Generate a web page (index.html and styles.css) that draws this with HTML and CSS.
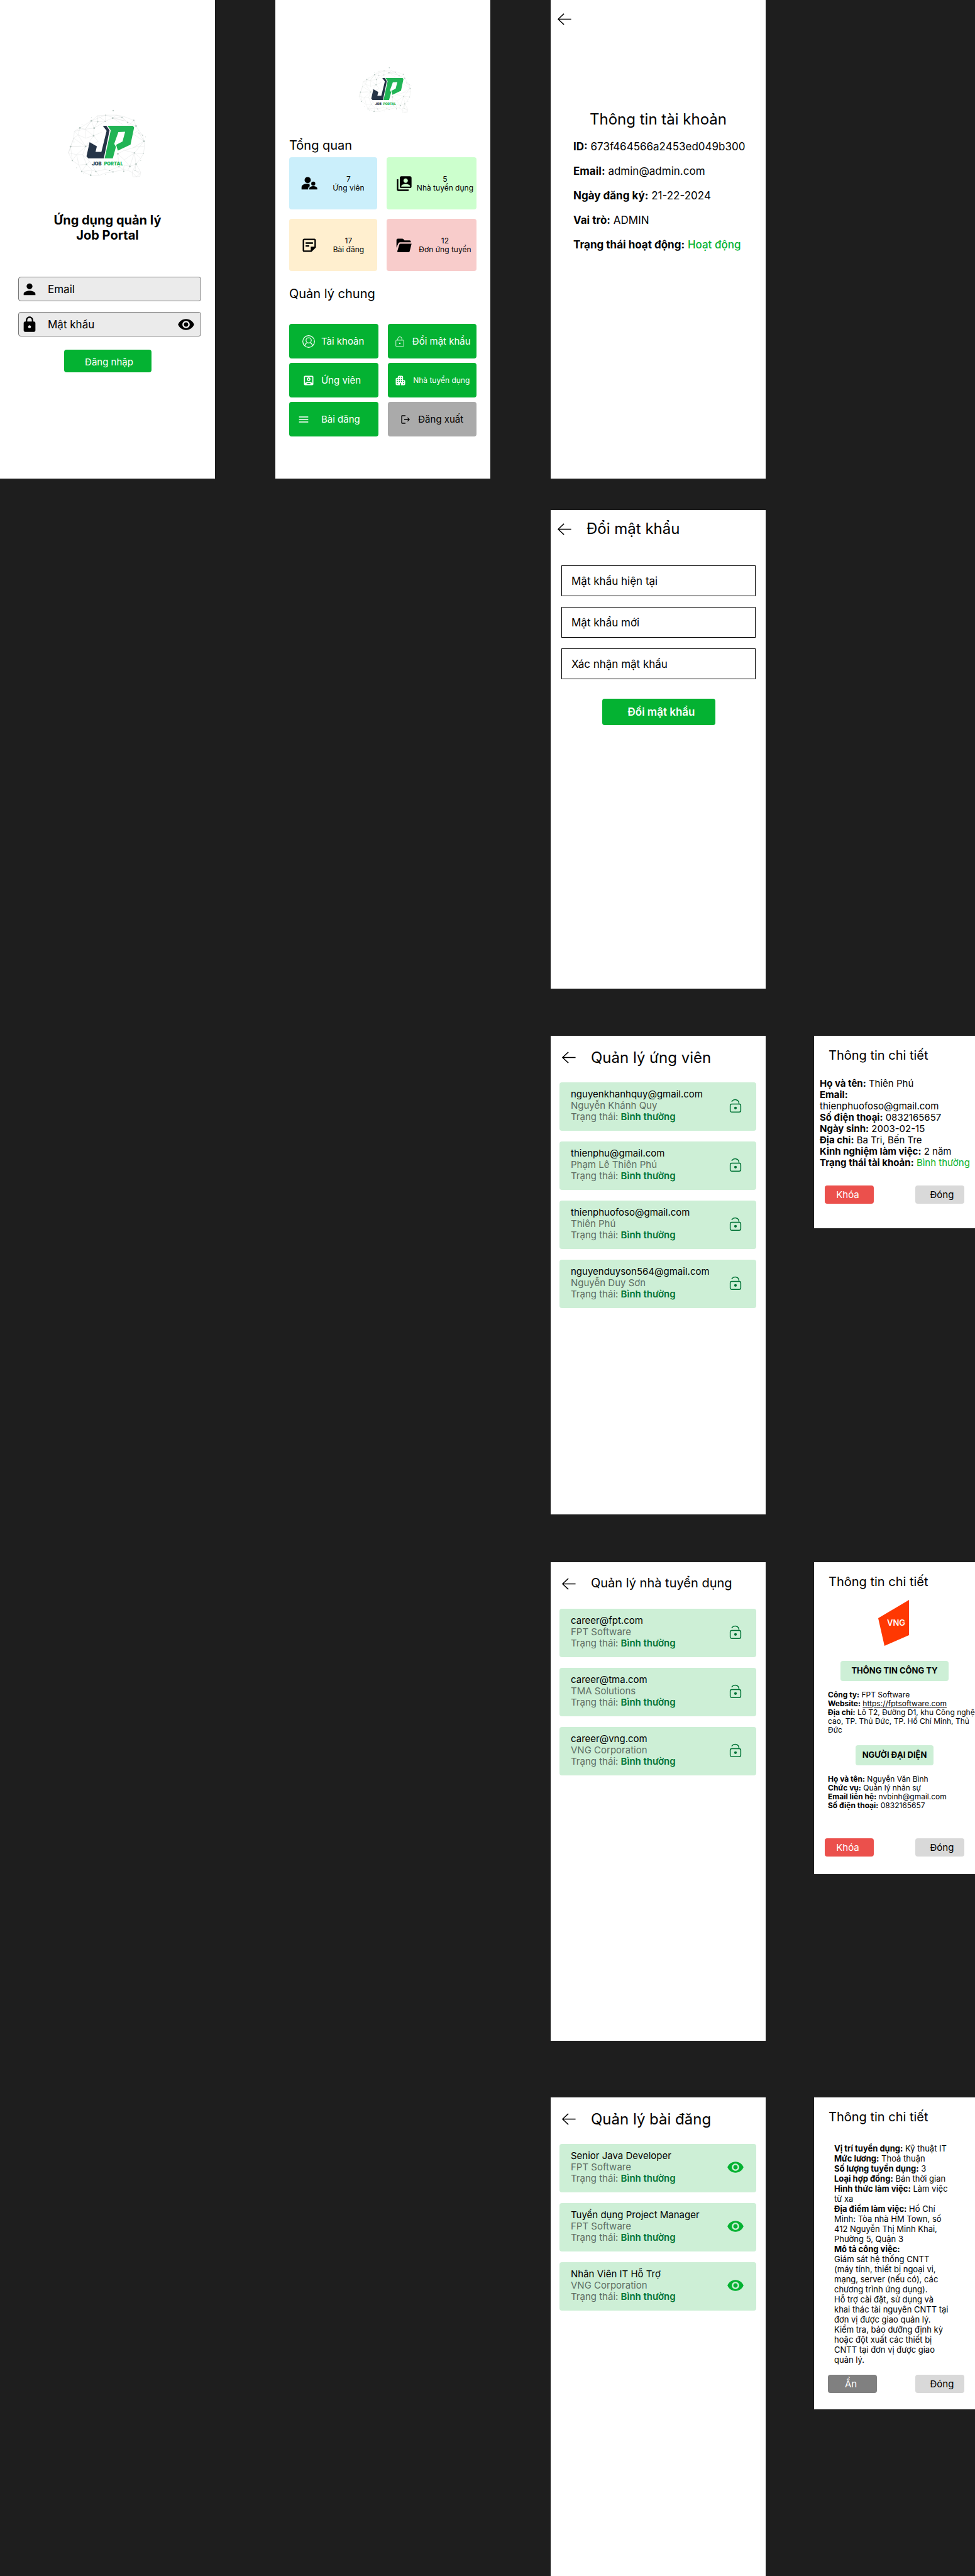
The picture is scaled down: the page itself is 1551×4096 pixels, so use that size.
FILE: index.html
```html
<!DOCTYPE html>
<html lang="vi">
<head>
<meta charset="utf-8">
<meta name="viewport" content="width=device-width, initial-scale=1">
<title>Job Portal – Ứng dụng quản lý</title>
<link rel="stylesheet" href="styles.css">
</head>
<body>
<svg class="sprite" aria-hidden="true">
  <symbol id="logo" viewBox="0 0 510 450">
    <g fill="none" stroke="#d9dddc" stroke-width="1.5">
      <path d="M28 280L58 195L62 155L94 136L160 95L197 65L242 62L304 62L342 68L405 92L418 125L434 150L456 178L464 213L468 240L460 285L445 312L418 344L430 365L445 392L440 416L400 418L395 392L370 380L345 376L285 390L240 396L205 410L156 409L104 387L88 350L50 324Z"/>
      <path d="M28 280L40 244L58 195L83 176L62 155M94 136L83 176L127 195L124 143L94 136M160 95L124 143L176 137L160 95L197 100L197 65L240 97L242 62M197 100L240 97L283 79L304 62L337 75L283 79M176 137L197 100M176 137L240 97M127 195L173 181L124 143M173 181L176 137M83 176L127 243L173 181M58 195L127 243L40 244L100 240M40 244L50 324L75 290L28 280M75 290L127 243L110 290L75 290L88 350L132 346L110 290L150 330L132 346L104 387L164 380L156 409M132 346L164 380L186 387L205 410M186 387L150 330M186 387L240 375L265 381L285 390M240 375L230 350M265 381L319 360L345 376L350 350L382 358L370 380M319 360L313 285L350 265L408 280L382 358M313 285L350 320L382 358L418 344L408 280L460 285M408 280L464 213L400 250M350 320L408 280L445 312M464 213L434 165L456 178M434 150L400 170L464 213M395 392L418 344L412 382L445 392M395 392L420 418L440 400L412 382M370 104L337 75L380 120L405 92M370 104L418 125M242 62L350 95L283 79L340 115M173 181L220 160M173 181L200 215L127 243M160 95L242 62M62 155L124 143L160 95M350 265L420 245L468 240"/>
    </g>
    <g fill="#b6c5c0">
      <circle cx="286" cy="36" r="4"/><circle cx="160" cy="95" r="5"/><circle cx="94" cy="136" r="5"/><circle cx="176" cy="137" r="5"/><circle cx="197" cy="100" r="4"/><circle cx="240" cy="98" r="4"/><circle cx="283" cy="79" r="5"/><circle cx="337" cy="75" r="4"/><circle cx="370" cy="104" r="4"/><circle cx="405" cy="92" r="4"/><circle cx="418" cy="125" r="5"/><circle cx="173" cy="181" r="5"/><circle cx="40" cy="244" r="5"/><circle cx="127" cy="243" r="5"/><circle cx="50" cy="324" r="4"/><circle cx="132" cy="346" r="4"/><circle cx="104" cy="387" r="4"/><circle cx="156" cy="409" r="5"/><circle cx="186" cy="387" r="4"/><circle cx="265" cy="381" r="4"/><circle cx="285" cy="390" r="4"/><circle cx="319" cy="360" r="4"/><circle cx="347" cy="386" r="4"/><circle cx="313" cy="285" r="5"/><circle cx="408" cy="280" r="4"/><circle cx="382" cy="358" r="5"/><circle cx="418" cy="344" r="5"/><circle cx="464" cy="213" r="5"/><circle cx="456" cy="178" r="3"/><circle cx="434" cy="165" r="3"/><circle cx="242" cy="62" r="3"/><circle cx="160" cy="76" r="2"/><circle cx="106" cy="118" r="2"/><circle cx="472" cy="188" r="2"/><circle cx="460" cy="285" r="3"/><circle cx="75" cy="366" r="2"/><circle cx="115" cy="401" r="2"/><circle cx="243" cy="404" r="2"/><circle cx="58" cy="195" r="2"/><circle cx="445" cy="325" r="2"/><circle cx="60" cy="217" r="2"/><circle cx="412" cy="382" r="3"/>
    </g>
    <path fill="#253447" d="M226 123H247L265 150L232 311H142L132 299L150 218L192 242L184 274H218L248 152Z"/>
    <path fill="#21b455" d="M253 123H400L407 133L386 232L313 267L303 233L340 214L355 158L316 160L292 228L302 245L284 311H237L272 150Z"/>
  </symbol>
  <symbol id="i-back" viewBox="0 0 26 22"><path d="M25.500 11H1M12 .8L1 11l11 10.200" fill="none" stroke="currentColor" stroke-width="1.700" stroke-linejoin="round"/></symbol>
  <symbol id="i-person" viewBox="0 0 24 24"><path d="M12 12c2.210 0 4-1.790 4-4s-1.790-4-4-4-4 1.790-4 4 1.790 4 4 4zm0 2c-2.670 0-8 1.340-8 4v2h16v-2c0-2.660-5.330-4-8-4z"/></symbol>
  <symbol id="i-lock" viewBox="0 0 24 24"><path d="M18 8h-1V6c0-2.760-2.240-5-5-5S7 3.240 7 6v2H6c-1.100 0-2 .9-2 2v10c0 1.100.9 2 2 2h12c1.100 0 2-.9 2-2V10c0-1.100-.9-2-2-2zm-6 9c-1.100 0-2-.9-2-2s.9-2 2-2 2 .9 2 2-.9 2-2 2zm3.100-9H8.900V6c0-1.710 1.390-3.100 3.100-3.100 1.710 0 3.100 1.390 3.100 3.100v2z"/></symbol>
  <symbol id="i-eye" viewBox="0 0 24 24"><path d="M12 4.500C7 4.500 2.730 7.610 1 12c1.730 4.390 6 7.500 11 7.500s9.270-3.110 11-7.500c-1.730-4.390-6-7.500-11-7.500zM12 17c-2.760 0-5-2.240-5-5s2.240-5 5-5 5 2.240 5 5-2.240 5-5 5zm0-8c-1.660 0-3 1.340-3 3s1.340 3 3 3 3-1.340 3-3-1.340-3-3-3z"/></symbol>
  <symbol id="i-people" viewBox="-2 -4 33 33"><circle cx="11.500" cy="5.800" r="5.800"/><circle cx="22" cy="12.500" r="3.800"/><path d="M0 23.500v-4.500C0 15 5.500 12.500 11 12.500q2.200 0 4.300.4C14.600 14.600 15 16 15.800 17.200 13.600 18.300 12.400 19.800 12.400 21.500v2zM14.500 23.500v-2c0-3 4-4.400 7.500-4.400s7.500 1.400 7.500 4.400v2z"/></symbol>
  <symbol id="i-switch" viewBox="0 0 24 24"><path d="M4 6H2v14c0 1.100.9 2 2 2h14v-2H4V6zm16-4H8c-1.100 0-2 .9-2 2v12c0 1.100.9 2 2 2h12c1.100 0 2-.9 2-2V4c0-1.100-.9-2-2-2zm-6 3c1.660 0 3 1.340 3 3s-1.340 3-3 3-3-1.340-3-3 1.340-3 3-3zm6 11H8v-.5c0-1.990 4-3 6-3s6 1.010 6 3v.5z"/></symbol>
  <symbol id="i-note" viewBox="0 0 24 24"><path d="M19 5v9h-5v5H5V5h14m0-2H5c-1.100 0-2 .9-2 2v14c0 1.100.9 2 2 2h10l6-6V5c0-1.100-.9-2-2-2zm-7 11H7v-2h5v2zm5-4H7V8h10v2z"/></symbol>
  <symbol id="i-folder" viewBox="-2 -4 33 33"><path d="M0 17V2.500Q0 0 2.500 0H11q1.200 0 2 .9L15 3.300H24.500Q27 3.300 27 6V7H6.500Q4.200 7 3.500 9zM7.500 9.500H28.300L24.800 23.700Q24.300 25.500 22.500 25.500H3Q1 25.500 1.600 23.500L5.300 11.200Q5.800 9.500 7.500 9.500z"/></symbol>
  <symbol id="i-account" viewBox="0 0 24 24"><g fill="none" stroke="currentColor" stroke-width="1.400"><circle cx="12" cy="12" r="11.200"/><circle cx="12" cy="9.800" r="5"/><path d="M4.600 20.200C5.300 17 7 15 9.300 14.100M19.400 20.200C18.700 17 17 15 14.700 14.100"/></g></symbol>
  <symbol id="i-lock-thin" viewBox="0 0 24 24"><g fill="none" stroke="currentColor"><rect x="4.500" y="9.500" width="15" height="12" rx="1"/><path d="M8 9.500V7a4 4 0 0 1 8 0v2.500"/></g><circle cx="12" cy="15.500" r="1.500"/></symbol>
  <symbol id="i-badge" viewBox="0 0 24 24"><path d="M19 5v14H5V5h14m0-2H5c-1.100 0-2 .9-2 2v14c0 1.100.9 2 2 2h14c1.100 0 2-.9 2-2V5c0-1.100-.9-2-2-2zm-7 10c-1.930 0-3.500-1.570-3.500-3.500S10.070 6 12 6s3.500 1.570 3.500 3.500S13.930 13 12 13zm0-5c-.83 0-1.500.67-1.500 1.500S11.170 11 12 11s1.500-.67 1.500-1.500S12.830 8 12 8zM5 19v-2.200c2-1.800 4.500-2.500 7-2.500s5 .7 7 2.500V19h-2c-1.500-1.800-3-2.600-5-2.600S8.500 17.200 7 19z"/></symbol>
  <symbol id="i-building" viewBox="0 0 24 24"><path d="M19 11h-2V5c0-1.100-.9-2-2-2H9C7.900 3 7 3.900 7 5v2H5C3.900 7 3 7.900 3 9v10c0 1.100.9 2 2 2h6v-4h2v4h6c1.100 0 2-.9 2-2v-6c0-1.100-.9-2-2-2zM7 19H5v-2h2v2zm0-4H5v-2h2v2zm0-4H5V9h2v2zm4 4H9v-2h2v2zm0-4H9V9h2v2zm0-4H9V5h2v2zm4 8h-2v-2h2v2zm0-4h-2V9h2v2zm0-4h-2V5h2v2zm4 12h-2v-2h2v2zm0-4h-2v-2h2v2z"/></symbol>
  <symbol id="i-menu" viewBox="0 0 24 24"><path d="M1 19h22v-2H1v2zm0-6h22v-2H1v2zm0-8v2h22V5H1z"/></symbol>
  <symbol id="i-logout" viewBox="0 0 24 24"><path d="M4 4h8V2H4c-1.100 0-2 .9-2 2v16c0 1.100.9 2 2 2h8v-2H4V4zM17.500 7l-1.400 1.400L18.700 11H9v2h9.700l-2.600 2.600 1.400 1.400 5-5z"/></symbol>
  <symbol id="i-unlock" viewBox="0 0 24 28"><g fill="none" stroke="currentColor" stroke-width="1.800" stroke-linecap="round"><rect x="1.800" y="10.400" width="20.400" height="15.400" rx="3"/><path d="M5 5.200C8.500.4 18.500.2 18.900 10"/></g><circle cx="12" cy="18" r="2.600"/></symbol>
</svg>

<main class="board">
  <section class="row">
    <article class="screen screen--first login">
      <svg class="logo logo--large" viewBox="0 0 510 450" role="img" aria-label="Job Portal"><use href="#logo"/><text x="164" y="352" class="logo-word logo-word--navy">JOB</text><text x="233" y="352" class="logo-word logo-word--green">PORTAL</text></svg>
      <h1 class="login-title">Ứng dụng quản lý<br>Job Portal</h1>
      <form class="login-form">
        <label class="field">
          <svg class="icon-28" aria-hidden="true"><use href="#i-person"/></svg>
          <input type="email" placeholder="Email" aria-label="Email">
        </label>
        <label class="field">
          <svg class="icon-28" aria-hidden="true"><use href="#i-lock"/></svg>
          <input type="password" placeholder="Mật khẩu" aria-label="Mật khẩu">
          <svg class="icon-28" aria-hidden="true"><use href="#i-eye"/></svg>
        </label>
        <button type="button" class="btn btn--login">Đăng nhập</button>
      </form>
    </article>

    <article class="screen screen--second dashboard">
      <svg class="logo logo--small" viewBox="0 0 510 450" role="img" aria-label="Job Portal"><use href="#logo"/><text x="164" y="352" class="logo-word logo-word--navy">JOB</text><text x="233" y="352" class="logo-word logo-word--green">PORTAL</text></svg>
      <h2 class="section-title">Tổng quan</h2>
      <div class="stats">
        <div class="stat stat--blue"><svg class="icon-28" aria-hidden="true"><use href="#i-people"/></svg><p>7<br>Ứng viên</p></div>
        <div class="stat stat--wide stat--green"><svg class="icon-28" aria-hidden="true"><use href="#i-switch"/></svg><p>5<br>Nhà tuyển dụng</p></div>
        <div class="stat stat--yellow"><svg class="icon-28" aria-hidden="true"><use href="#i-note"/></svg><p>17<br>Bài đăng</p></div>
        <div class="stat stat--wide stat--red"><svg class="icon-28" aria-hidden="true"><use href="#i-folder"/></svg><p>12<br>Đơn ứng tuyển</p></div>
      </div>
      <h2 class="section-title section-title--manage">Quản lý chung</h2>
      <nav class="tiles">
        <button type="button" class="tile tile--start"><svg class="icon-20" aria-hidden="true"><use href="#i-account"/></svg>Tài khoản</button>
        <button type="button" class="tile"><svg class="icon-20" aria-hidden="true"><use href="#i-lock-thin"/></svg>Đổi mật khẩu</button>
        <button type="button" class="tile tile--start"><svg class="icon-20" aria-hidden="true"><use href="#i-badge"/></svg>Ứng viên</button>
        <button type="button" class="tile tile--small"><svg class="icon-20" aria-hidden="true"><use href="#i-building"/></svg>Nhà tuyển dụng</button>
        <button type="button" class="tile tile--start tile--menu"><svg class="icon-16" aria-hidden="true"><use href="#i-menu"/></svg>Bài đăng</button>
        <button type="button" class="tile tile--gray"><svg class="icon-16" aria-hidden="true"><use href="#i-logout"/></svg>Đăng xuất</button>
      </nav>
    </article>

    <article class="screen account">
      <header class="topbar topbar--form"><button type="button" class="back" aria-label="Quay lại"><svg aria-hidden="true"><use href="#i-back"/></svg></button></header>
      <h1 class="title account-title">Thông tin tài khoản</h1>
      <div class="account-info">
        <p><b>ID:</b> 673f464566a2453ed049b300</p>
        <p><b>Email:</b> admin@admin.com</p>
        <p><b>Ngày đăng ký:</b> 21-22-2024</p>
        <p><b>Vai trò:</b> ADMIN</p>
        <p><b>Trạng thái hoạt động:</b> <span class="active">Hoạt động</span></p>
      </div>
    </article>
  </section>

  <section class="row row--password">
    <article class="screen">
      <header class="topbar topbar--form"><button type="button" class="back" aria-label="Quay lại"><svg aria-hidden="true"><use href="#i-back"/></svg></button><h1 class="title">Đổi mật khẩu</h1></header>
      <form class="password-form">
        <input type="password" placeholder="Mật khẩu hiện tại" aria-label="Mật khẩu hiện tại">
        <input type="password" placeholder="Mật khẩu mới" aria-label="Mật khẩu mới">
        <input type="password" placeholder="Xác nhận mật khẩu" aria-label="Xác nhận mật khẩu">
        <button type="button" class="btn btn--password">Đổi mật khẩu</button>
      </form>
    </article>
  </section>

  <section class="row row--candidates">
    <article class="screen">
      <header class="topbar"><button type="button" class="back" aria-label="Quay lại"><svg aria-hidden="true"><use href="#i-back"/></svg></button><h1 class="title">Quản lý ứng viên</h1></header>
      <ul class="cards">
        <li class="card"><p>nguyenkhanhquy@gmail.com<br><span class="muted">Nguyễn Khánh Quy<br>Trạng thái: <b>Bình thường</b></span></p><button type="button" class="card-action" aria-label="Khóa"><svg class="unlock" aria-hidden="true"><use href="#i-unlock"/></svg></button></li>
        <li class="card"><p>thienphu@gmail.com<br><span class="muted">Phạm Lê Thiên Phú<br>Trạng thái: <b>Bình thường</b></span></p><button type="button" class="card-action" aria-label="Khóa"><svg class="unlock" aria-hidden="true"><use href="#i-unlock"/></svg></button></li>
        <li class="card"><p>thienphuofoso@gmail.com<br><span class="muted">Thiên Phú<br>Trạng thái: <b>Bình thường</b></span></p><button type="button" class="card-action" aria-label="Khóa"><svg class="unlock" aria-hidden="true"><use href="#i-unlock"/></svg></button></li>
        <li class="card"><p>nguyenduyson564@gmail.com<br><span class="muted">Nguyễn Duy Sơn<br>Trạng thái: <b>Bình thường</b></span></p><button type="button" class="card-action" aria-label="Khóa"><svg class="unlock" aria-hidden="true"><use href="#i-unlock"/></svg></button></li>
      </ul>
    </article>
    <aside class="modal">
      <h2 class="modal-title">Thông tin chi tiết</h2>
      <div class="modal-body person">
        <p><b>Họ và tên:</b> Thiên Phú</p>
        <p><b>Email:</b><br>thienphuofoso@gmail.com</p>
        <p><b>Số điện thoại:</b> 0832165657</p>
        <p><b>Ngày sinh:</b> 2003-02-15</p>
        <p><b>Địa chỉ:</b> Ba Tri, Bến Tre</p>
        <p><b>Kinh nghiệm làm việc:</b> 2 năm</p>
        <p><b>Trạng thái tài khoản:</b> <span class="normal">Bình thường</span></p>
      </div>
      <div class="modal-actions"><button type="button" class="btn btn--danger">Khóa</button><button type="button" class="btn btn--close">Đóng</button></div>
    </aside>
  </section>

  <section class="row row--employers">
    <article class="screen">
      <header class="topbar"><button type="button" class="back" aria-label="Quay lại"><svg aria-hidden="true"><use href="#i-back"/></svg></button><h1 class="title title--long">Quản lý nhà tuyển dụng</h1></header>
      <ul class="cards">
        <li class="card"><p>career@fpt.com<br><span class="muted">FPT Software<br>Trạng thái: <b>Bình thường</b></span></p><button type="button" class="card-action" aria-label="Khóa"><svg class="unlock" aria-hidden="true"><use href="#i-unlock"/></svg></button></li>
        <li class="card"><p>career@tma.com<br><span class="muted">TMA Solutions<br>Trạng thái: <b>Bình thường</b></span></p><button type="button" class="card-action" aria-label="Khóa"><svg class="unlock" aria-hidden="true"><use href="#i-unlock"/></svg></button></li>
        <li class="card"><p>career@vng.com<br><span class="muted">VNG Corporation<br>Trạng thái: <b>Bình thường</b></span></p><button type="button" class="card-action" aria-label="Khóa"><svg class="unlock" aria-hidden="true"><use href="#i-unlock"/></svg></button></li>
      </ul>
    </article>
    <aside class="modal modal--tall">
      <h2 class="modal-title">Thông tin chi tiết</h2>
      <svg class="vng" viewBox="0 0 49 73" role="img" aria-label="VNG"><path fill="#ff3802" d="M0 29L49 0V56L10 73z"/><text x="14" y="41" class="vng-word">VNG</text></svg>
      <h3 class="badge badge--company">THÔNG TIN CÔNG TY</h3>
      <div class="modal-body company">
        <p><b>Công ty:</b> FPT Software</p>
        <p><b>Website:</b> <a href="https://fptsoftware.com">https://fptsoftware.com</a></p>
        <p><b>Địa chỉ:</b> Lô T2, Đường D1, khu Công nghệ cao, TP. Thủ Đức, TP. Hồ Chí Minh, Thủ Đức</p>
      </div>
      <h3 class="badge badge--contact">NGƯỜI ĐẠI DIỆN</h3>
      <div class="modal-body company">
        <p><b>Họ và tên:</b> Nguyễn Văn Bình</p>
        <p><b>Chức vụ:</b> Quản lý nhân sự</p>
        <p><b>Email liên hệ:</b> nvbinh@gmail.com</p>
        <p><b>Số điện thoại:</b> 0832165657</p>
      </div>
      <div class="modal-actions"><button type="button" class="btn btn--danger">Khóa</button><button type="button" class="btn btn--close">Đóng</button></div>
    </aside>
  </section>

  <section class="row row--posts">
    <article class="screen">
      <header class="topbar"><button type="button" class="back" aria-label="Quay lại"><svg aria-hidden="true"><use href="#i-back"/></svg></button><h1 class="title">Quản lý bài đăng</h1></header>
      <ul class="cards">
        <li class="card"><p>Senior Java Developer<br><span class="muted">FPT Software<br>Trạng thái: <b>Bình thường</b></span></p><button type="button" class="card-action card-action--view" aria-label="Xem"><svg class="icon-28" aria-hidden="true"><use href="#i-eye"/></svg></button></li>
        <li class="card"><p>Tuyển dụng Project Manager<br><span class="muted">FPT Software<br>Trạng thái: <b>Bình thường</b></span></p><button type="button" class="card-action card-action--view" aria-label="Xem"><svg class="icon-28" aria-hidden="true"><use href="#i-eye"/></svg></button></li>
        <li class="card"><p>Nhân Viên IT Hỗ Trợ<br><span class="muted">VNG Corporation<br>Trạng thái: <b>Bình thường</b></span></p><button type="button" class="card-action card-action--view" aria-label="Xem"><svg class="icon-28" aria-hidden="true"><use href="#i-eye"/></svg></button></li>
      </ul>
    </article>
    <aside class="modal modal--tall">
      <h2 class="modal-title">Thông tin chi tiết</h2>
      <div class="modal-body job">
        <p><b>Vị trí tuyển dụng:</b> Kỹ thuật IT</p>
        <p><b>Mức lương:</b> Thoả thuận</p>
        <p><b>Số lượng tuyển dụng:</b> 3</p>
        <p><b>Loại hợp đồng:</b> Bán thời gian</p>
        <p><b>Hình thức làm việc:</b> Làm việc từ xa</p>
        <p><b>Địa điểm làm việc:</b> Hồ Chí Minh: Tòa nhà HM Town, số 412 Nguyễn Thị Minh Khai, Phường 5, Quận 3</p>
        <p><b>Mô tả công việc:</b></p>
        <p>Giám sát hệ thống CNTT (máy tính, thiết bị ngoại vi, mạng, server (nếu có), các chương trình ứng dụng).</p>
        <p>Hỗ trợ cài đặt, sử dụng và khai thác tài nguyên CNTT tại đơn vị được giao quản lý.</p>
        <p>Kiểm tra, bảo dưỡng định kỳ hoặc đột xuất các thiết bị CNTT tại đơn vị được giao quản lý.</p>
      </div>
      <div class="modal-actions modal-actions--job"><button type="button" class="btn btn--hide">Ẩn</button><button type="button" class="btn btn--close">Đóng</button></div>
    </aside>
  </section>
</main>
</body>
</html>
```
FILE: styles.css
```css
* {
  box-sizing: border-box;
}

body {
  margin: 0;
  background: #1e1e1e;
  color: #000;
  font-family: Inter, "Noto Sans", sans-serif;
  font-size: 15px;
  line-height: 18px;
}

h1, h2, h3, p, ul {
  margin: 0;
  padding: 0;
  font-weight: 400;
}

button, input {
  font: inherit;
  color: inherit;
  border: 0;
  padding: 0;
  background: none;
}

svg {
  display: block;
  flex: none;
  fill: currentColor;
}

.sprite {
  position: absolute;
  width: 0;
  height: 0;
}

/* Board: one row per flow, three phone columns and a dialog column */
.row {
  display: grid;
  grid-template-columns:
    minmax(0, 342fr) minmax(0, 96fr) minmax(0, 342fr) minmax(0, 96fr)
    minmax(0, 342fr) minmax(0, 77fr) minmax(0, 256fr);
  align-items: start;
}

.row--password { margin-top: 50px; }
.row--candidates { margin-top: 75px; }
.row--employers { margin-top: 76px; }
.row--posts { margin-top: 90px; }

.screen {
  grid-column: 5;
  min-height: 761px;
  background: #fff;
}

.screen--first { grid-column: 1; }
.screen--second { grid-column: 3; }

.modal {
  grid-column: 7;
  min-height: 306px;
  background: #fff;
}

.modal--tall { min-height: 496px; }

.icon-28 { width: 28px; height: 28px; }
.icon-20 { width: 20px; height: 20px; }
.icon-16 { width: 16px; height: 16px; }

.btn {
  border-radius: 4px;
  color: #fff;
}

/* Login */
.login {
  display: flex;
  flex-direction: column;
  align-items: center;
  padding-top: 166px;
}

.logo--large { width: 141px; height: 124px; }
.logo--small { width: 95px; height: 84px; }

.logo-word {
  font-size: 27px;
  font-weight: 900;
}

.logo-word--navy { fill: #253447; }
.logo-word--green { fill: #21b455; }

.login-title {
  margin-top: 48px;
  font-size: 20px;
  line-height: 24px;
  font-weight: 700;
  text-align: center;
}

.login-form {
  display: flex;
  flex-direction: column;
  align-items: center;
  gap: 17px;
  align-self: stretch;
  margin-top: 54px;
  padding: 0 22px 0 29px;
}

.field {
  display: flex;
  align-items: center;
  width: 100%;
  height: 39px;
  padding: 0 9px 0 3px;
  border: 1px solid #777;
  border-radius: 4px;
  background: #ebebeb;
}

.field input {
  flex: 1;
  min-width: 0;
  padding-left: 15px;
  font-size: 17px;
}

input::placeholder {
  color: #000;
  opacity: 1;
}

.btn--login {
  width: 139px;
  height: 36px;
  margin-top: 4px;
  margin-right: 7px;
  padding: 4px 0 0 5px;
  background: #04b232;
}

/* Dashboard */
.dashboard {
  padding: 101px 22px 0;
}

.logo--small {
  margin: 0 auto;
  transform: translateX(4px);
}

.section-title {
  margin-top: 34px;
  font-size: 20px;
  line-height: 24px;
}

.section-title--manage { margin-top: 24px; }

.stats {
  display: grid;
  grid-template-columns: 1fr 1fr;
  gap: 15px;
  margin-top: 7px;
}

.stat {
  display: grid;
  grid-template-columns: 44px 1fr;
  place-items: center;
  height: 83px;
  padding: 0 5px 0 10px;
  border-radius: 4px;
  font-size: 12px;
  line-height: 14px;
  text-align: center;
  white-space: nowrap;
}

.stat--wide {
  grid-template-columns: 40px 1fr;
  padding-left: 8px;
}

.stat--blue { background: #cbeffb; }
.stat--green { background: #ccffcd; }
.stat--yellow { background: #ffefcf; }
.stat--red { background: #f8cccb; }

.tiles {
  display: grid;
  grid-template-columns: 1fr 1fr;
  gap: 7px 15px;
  margin-top: 36px;
}

.tile {
  display: flex;
  align-items: center;
  justify-content: center;
  gap: 10px;
  height: 55px;
  border-radius: 4px;
  background: #04b232;
  color: #fff;
  white-space: nowrap;
}

.tile--start {
  justify-content: flex-start;
  padding-left: 21px;
}

.tile--menu {
  gap: 20px;
  padding-left: 15px;
}

.tile--small { font-size: 12px; }

.tile--gray {
  gap: 12px;
  background: #aaa;
  color: #000;
}

/* Screen header */
.topbar {
  display: flex;
  align-items: center;
  gap: 24px;
  height: 74px;
  padding: 0 0 5px 18px;
}

.topbar--form {
  height: 60px;
  padding: 0 0 0 11px;
}

.back svg {
  width: 22px;
  height: 19px;
}

.title {
  font-size: 24px;
  line-height: 28px;
}

.title--long {
  padding-bottom: 4px;
  font-size: 20px;
}

/* Account */
.account-title {
  margin-top: 116px;
  text-align: center;
}

.account-info {
  display: grid;
  gap: 15px;
  margin-top: 17px;
  padding-left: 36px;
  font-size: 17px;
  line-height: 24px;
}

.active {
  color: #04b232;
  font-weight: 500;
}

/* Change password */
.password-form {
  display: flex;
  flex-direction: column;
  align-items: center;
  gap: 17px;
  padding: 28px 16px 0 17px;
  font-size: 17px;
}

.password-form input {
  width: 100%;
  height: 49px;
  padding-left: 15px;
  border: 1px solid #000;
}

.btn--password {
  width: 180px;
  height: 42px;
  margin-top: 14px;
  padding-left: 9px;
  background: #04b232;
  font-weight: 600;
}

/* Card lists */
.cards {
  display: grid;
  gap: 17px;
  padding: 0 15px 0 14px;
  list-style: none;
}

.card {
  display: flex;
  align-items: center;
  justify-content: space-between;
  height: 77px;
  padding: 0 23px 3px 18px;
  border-radius: 4px;
  background: #cdefd6;
}

.muted { color: #5d6d62; }

.muted b {
  color: #007336;
  font-weight: 600;
}

.card-action { color: #007336; }

.card-action--view {
  margin-right: -4px;
  color: #04b232;
}

.unlock {
  width: 20px;
  height: 23px;
}

/* Detail dialogs */
.modal-title {
  padding: 19px 0 0 23px;
  font-size: 20px;
  line-height: 24px;
}

.modal-body b { font-weight: 700; }

.person {
  padding: 24px 0 0 9px;
  white-space: nowrap;
}

.normal { color: #04b232; }

.company {
  padding-left: 22px;
  font-size: 12px;
  line-height: 14px;
}

.company a { color: inherit; }

.job {
  padding: 30px 40px 0 32px;
  font-size: 13px;
  line-height: 16px;
}

.vng {
  width: 49px;
  height: 73px;
  margin: 17px auto 0 102px;
}

.vng-word {
  fill: #fff;
  font-size: 13px;
  font-weight: 600;
}

.badge {
  height: 32px;
  margin: 24px auto 15px;
  border-radius: 4px;
  background: #cdefd6;
  font-size: 13px;
  line-height: 31px;
  font-weight: 700;
  text-align: center;
}

.badge--company { width: 172px; }

.badge--contact {
  width: 124px;
  margin-top: 17px;
}

.modal-actions {
  display: flex;
  justify-content: space-between;
  padding: 27px 17px 0;
}

.company + .modal-actions { padding-top: 45px; }

.modal-actions--job { padding: 16px 17px 0 22px; }

.modal-actions .btn {
  width: 78px;
  height: 29px;
}

.modal-actions .btn--danger {
  padding-right: 5px;
  background: #eb504c;
}

.modal-actions .btn--hide {
  padding-right: 5px;
  background: #808080;
}

.modal-actions .btn--close {
  padding-left: 7px;
  background: #d9d9d9;
  color: #000;
}
```
